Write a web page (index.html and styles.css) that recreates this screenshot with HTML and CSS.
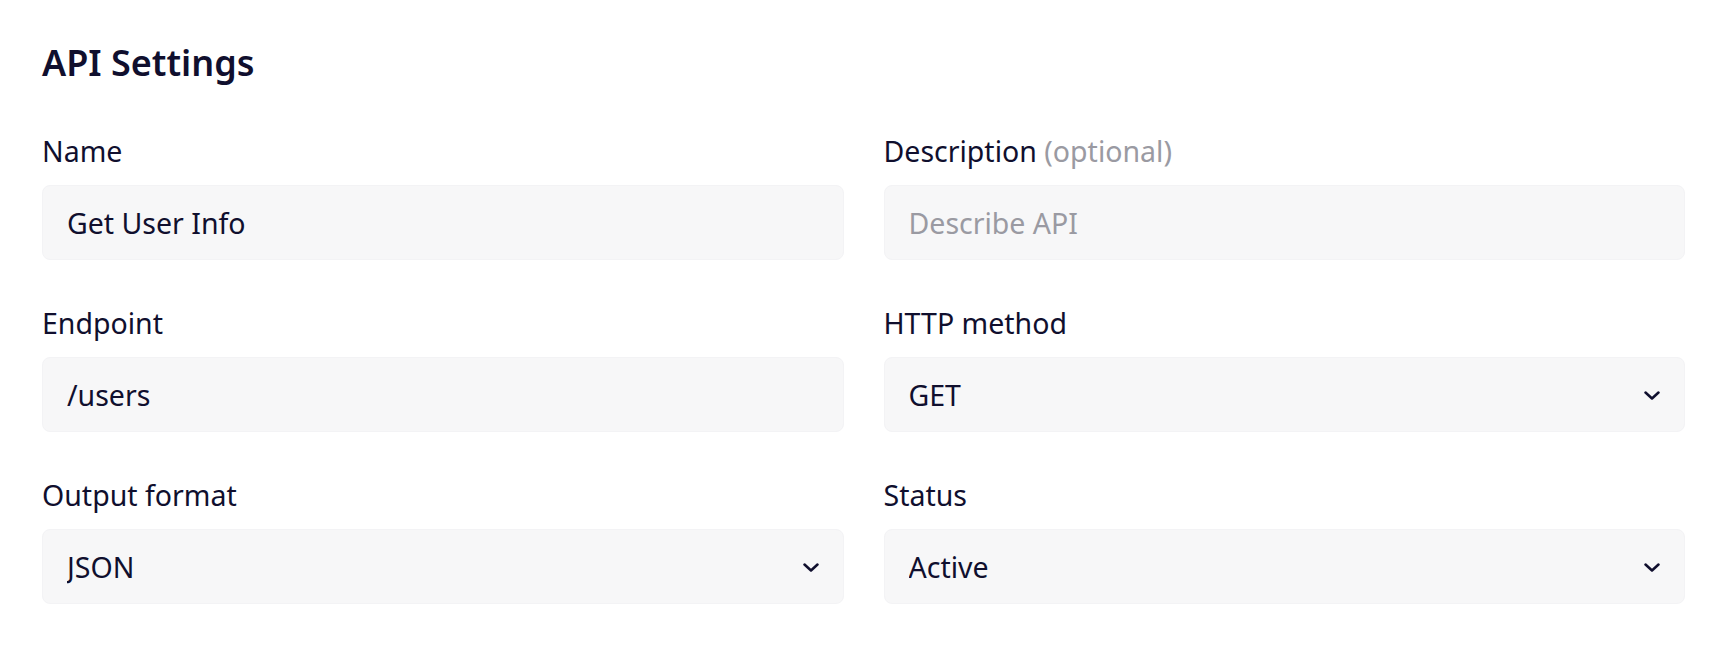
FILE: index.html
```html
<!DOCTYPE html>
<html lang="en">
<head>
    <meta charset="UTF-8">
    <meta name="viewport" content="width=device-width, initial-scale=1.0">
    <title>API Settings</title>
    <link rel="stylesheet" href="styles.css">
</head>
<body>
    <section class="settings">
        <h1 class="settings-title">API Settings</h1>

        <form class="settings-form">
            <div class="field">
                <label for="apiName">Name</label>
                <input id="apiName" class="control" type="text" value="Get User Info">
            </div>

            <div class="field">
                <label for="apiDesc">Description <span class="optional">(optional)</span></label>
                <input id="apiDesc" class="control" type="text" placeholder="Describe API">
            </div>

            <div class="field">
                <label for="apiEndpoint">Endpoint</label>
                <input id="apiEndpoint" class="control" type="text" value="/users">
            </div>

            <div class="field">
                <label for="apiMethod">HTTP method</label>
                <div class="select-wrap">
                    <select id="apiMethod" class="control">
                        <option>GET</option>
                        <option>POST</option>
                        <option>PUT</option>
                        <option>DELETE</option>
                    </select>
                    <svg class="chevron" viewBox="0 0 16 9" width="16" height="9"><polyline points="1.5,1.5 8,7.5 14.5,1.5"/></svg>
                </div>
            </div>

            <div class="field">
                <label for="apiFormat">Output format</label>
                <div class="select-wrap">
                    <select id="apiFormat" class="control">
                        <option>JSON</option>
                        <option>XML</option>
                    </select>
                    <svg class="chevron" viewBox="0 0 16 9" width="16" height="9"><polyline points="1.5,1.5 8,7.5 14.5,1.5"/></svg>
                </div>
            </div>

            <div class="field">
                <label for="apiStatus">Status</label>
                <div class="select-wrap">
                    <select id="apiStatus" class="control">
                        <option>Active</option>
                        <option>Inactive</option>
                    </select>
                    <svg class="chevron" viewBox="0 0 16 9" width="16" height="9"><polyline points="1.5,1.5 8,7.5 14.5,1.5"/></svg>
                </div>
            </div>
        </form>
    </section>
</body>
</html>
```

FILE: styles.css
```css
* {
    margin: 0;
    padding: 0;
    box-sizing: border-box;
}

body {
    font-family: "Noto Sans", "Open Sans", sans-serif;
    color: #100f2e;
    background-color: #fff;
}

.settings {
    width: 1643px;
    margin-left: 42px;
    padding-top: 39px;
}

.settings-title {
    font-size: 36px;
    font-weight: 600;
    line-height: 48px;
    margin-bottom: 45px;
}

/* Form grid */
.settings-form {
    display: grid;
    grid-template-columns: 1fr 1fr;
    column-gap: 40px;
    row-gap: 44px;
}

.field label {
    display: block;
    font-size: 28.5px;
    line-height: 39px;
    margin-bottom: 14px;
}

.optional {
    color: #9a9aa2;
}

.control {
    display: block;
    width: 100%;
    height: 75px;
    padding: 0 24px;
    font: inherit;
    font-size: 28.5px;
    color: #100f2e;
    background-color: #f7f7f8;
    border: 1px solid #f3f3f5;
    border-radius: 8px;
    outline: none;
}

.control::placeholder {
    color: #9a9aa2;
}

select.control {
    appearance: none;
    -webkit-appearance: none;
    cursor: pointer;
}

.select-wrap {
    position: relative;
}

.chevron {
    position: absolute;
    right: 25px;
    top: 50%;
    margin-top: -4px;
    fill: none;
    stroke: #100f2e;
    stroke-width: 2.5;
    stroke-linecap: round;
    stroke-linejoin: round;
    pointer-events: none;
}
```
